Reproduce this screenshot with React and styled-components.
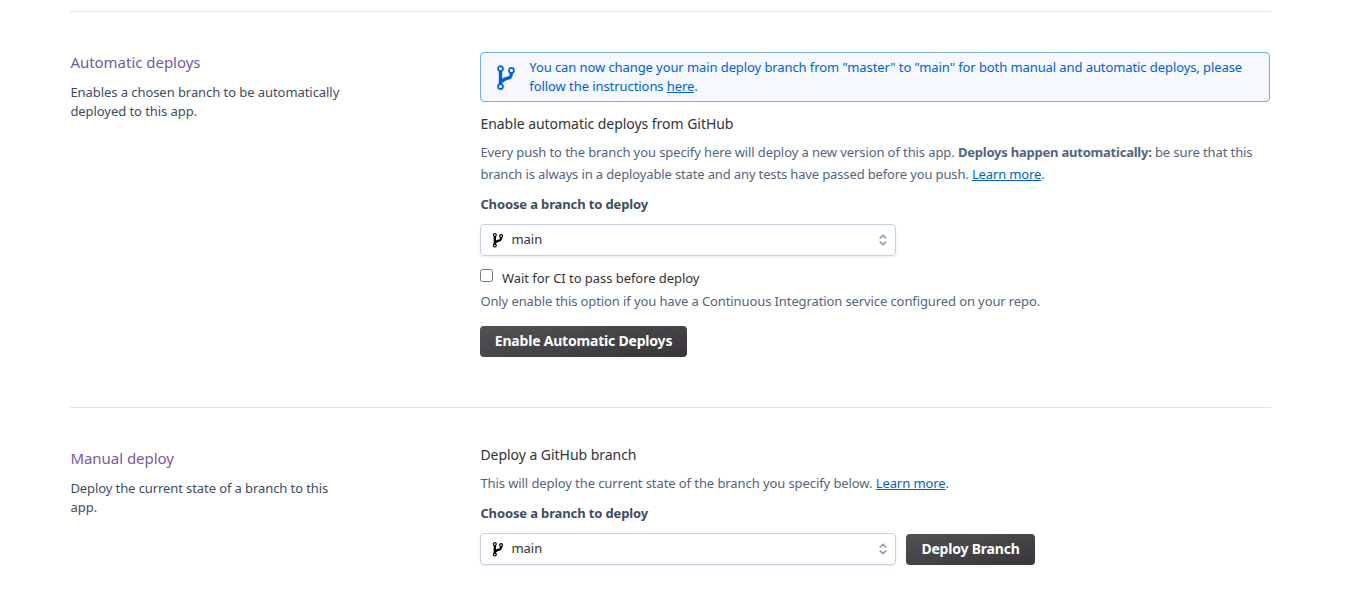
import React from "react";
import styled, { createGlobalStyle } from "styled-components";

const Global = createGlobalStyle`
  * { box-sizing: border-box; }
  body { margin: 0; background: #fff; font-family: "Noto Sans", sans-serif; font-size: 13px; color: #333; }
  h2, h3, p { margin: 0; font-weight: 400; }
`;

const Page = styled.main`
  width: 1201px;
  margin-left: 70px;
  padding-top: 11px;
`;

const Section = styled.section`
  display: grid;
  grid-template-columns: 410px 790px;
  height: ${(p) => p.$height}px;
  padding-top: 40px;
  border-top: 1px solid #e3e5ec;
`;

const Title = styled.h2`
  margin-top: -1px;
  padding-left: 0.4px;
  font-size: 15px;
  line-height: 22px;
  color: #79589f;
  letter-spacing: -0.03px;
`;

const Summary = styled.p`
  margin-top: 10px;
  padding-left: 0.4px;
  line-height: 19px;
  color: #3f4d5f;
`;

const Line = styled.span`
  display: block;
  white-space: nowrap;
  letter-spacing: ${(p) => p.$track || 0}px;
`;

const Notice = styled.div`
  display: flex;
  align-items: center;
  height: 50px;
  padding-left: 15px;
  border: 1px solid #76ade9;
  border-radius: 4px;
  background: #f5f8ff;
  color: #0061e0;
  line-height: 19px;
  svg { margin: 2px 13.3px 0 0; }
`;

const Heading = styled.h3`
  margin-top: ${(p) => p.$top}px;
  padding-left: 0.4px;
  font-size: 14px;
  line-height: 22px;
  color: #333338;
  letter-spacing: -0.04px;
`;

const Body = styled.p`
  margin-top: 6px;
  padding-left: 0.4px;
  line-height: 22px;
  color: #54657e;
  b { letter-spacing: -0.22px; }
`;

const Link = styled.a`
  color: ${(p) => (p.$inherit ? "inherit" : "#0061d5")};
  text-decoration: underline;
  text-underline-offset: 1px;
`;

const Label = styled.div`
  margin-top: 8px;
  padding-left: 0.4px;
  line-height: 22px;
  font-weight: 700;
  color: #3f4d5f;
  letter-spacing: -0.13px;
`;

const Select = styled.div`
  display: flex;
  align-items: center;
  width: 416px;
  height: 32px;
  padding: 0 8px 0 11px;
  border: 1px solid #c6d1e4;
  border-radius: 4px;
  box-shadow: 0 1px 2px rgba(90, 110, 150, 0.14);
  color: #333338;
  span { flex: 1; margin-left: 7.4px; padding-bottom: 2px; line-height: 20px; }
`;

const Controls = styled.div`
  display: flex;
  align-items: flex-end;
  gap: 10px;
  margin-top: 9px;
`;

const CheckRow = styled.label`
  display: flex;
  align-items: flex-start;
  gap: 9px;
  margin-top: 11px;
  line-height: 22px;
  color: #333338;
`;

const Check = styled.input`
  width: 13px;
  height: 13px;
  margin: 2px 0 0;
`;

const Help = styled.p`
  margin-top: 1px;
  padding-left: 0.4px;
  line-height: 22px;
  color: #54657e;
`;

const Button = styled.button`
  display: block;
  width: ${(p) => p.$width}px;
  height: 31px;
  margin-top: ${(p) => p.$top || 0}px;
  padding: 0 0 2px;
  border: 0;
  border-radius: 4px;
  background: linear-gradient(170deg, #525154, #38363b);
  color: #fff;
  font: 700 14px/29px "Noto Sans", sans-serif;
  white-space: nowrap;
  letter-spacing: -0.2px;
`;

const BranchIcon = ({ width, height, stem, ring, color }) => (
  <svg width={width} height={height} viewBox="0 0 20 26" fill="none" stroke={color}>
    <path d="M4.500 6v13.500M4.500 17L9 14C13.500 12.800 15.300 12.800 15.400 8" strokeWidth={stem} />
    <circle cx="4.500" cy="3.600" r="2.500" strokeWidth={ring} />
    <circle cx="15.400" cy="5.400" r="2.500" strokeWidth={ring} />
    <circle cx="4.500" cy="21.600" r="2.500" strokeWidth={ring} />
  </svg>
);

const BranchSelect = () => (
  <Select>
    <BranchIcon width={12} height={15} stem={4} ring={2.1} color="#000" />
    <span>main</span>
    <svg width="8" height="12" viewBox="0 0 8 12" fill="none" stroke="#8b9bb3" strokeWidth="1.700">
      <path d="M0.700 4.500L4 1.400L7.300 4.500M0.700 7.500L4 10.600L7.300 7.500" />
    </svg>
  </Select>
);

export default function App() {
  return (
    <>
      <Global />
      <Page>
        <Section $height={396}>
          <div>
            <Title>Automatic deploys</Title>
            <Summary>
              <Line $track={-0.065}>Enables a chosen branch to be automatically</Line>
              <Line $track={-0.065}>deployed to this app.</Line>
            </Summary>
          </div>
          <div>
            <Notice>
              <BranchIcon width={20} height={26} stem={3.4} ring={1.7} color="#0061e0" />
              <div>
                <Line $track={-0.088}>You can now change your main deploy branch from "master" to "main" for both manual and automatic deploys, please</Line>
                <Line $track={-0.07}>follow the instructions <Link $inherit>here</Link>.</Line>
              </div>
            </Notice>
            <Heading $top={11}>Enable automatic deploys from GitHub</Heading>
            <Body>
              <Line $track={-0.098}>Every push to the branch you specify here will deploy a new version of this app. <b>Deploys happen automatically:</b> be sure that this</Line>
              <Line $track={-0.14}>branch is always in a deployable state and any tests have passed before you push. <Link>Learn more</Link>.</Line>
            </Body>
            <Label>Choose a branch to deploy</Label>
            <Controls><BranchSelect /></Controls>
            <CheckRow>
              <Check type="checkbox" />
              <Line $track={-0.05}>Wait for CI to pass before deploy</Line>
            </CheckRow>
            <Help><Line $track={-0.105}>Only enable this option if you have a Continuous Integration service configured on your repo.</Line></Help>
            <Button $width={207} $top={14}>Enable Automatic Deploys</Button>
          </div>
        </Section>
        <Section $height={197}>
          <div>
            <Title>Manual deploy</Title>
            <Summary>
              <Line $track={-0.09}>Deploy the current state of a branch to this</Line>
              <Line>app.</Line>
            </Summary>
          </div>
          <div>
            <Heading $top={-4}>Deploy a GitHub branch</Heading>
            <Body>
              <Line $track={-0.085}>This will deploy the current state of the branch you specify below. <Link>Learn more</Link>.</Line>
            </Body>
            <Label>Choose a branch to deploy</Label>
            <Controls>
              <BranchSelect />
              <Button $width={129}>Deploy Branch</Button>
            </Controls>
          </div>
        </Section>
      </Page>
    </>
  );
}
